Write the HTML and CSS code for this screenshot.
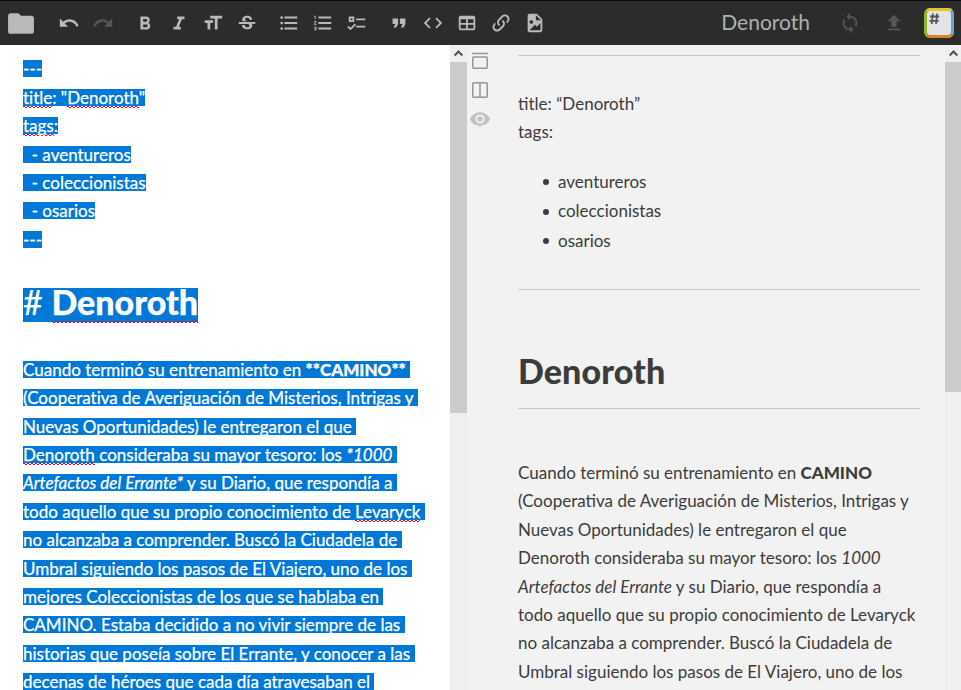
FILE: index.html
```
<!DOCTYPE html>
<html lang="es">
<head>
<meta charset="utf-8">
<title>Denoroth</title>
<link rel="stylesheet" href="styles.css">
</head>
<body>
<header class="navbar">
  <svg class="folder" viewBox="0 0 24 24"><path d="M10,4H4C2.89,4 2,4.89 2,6V18A2,2 0 0,0 4,20H20A2,2 0 0,0 22,18V8C22,6.89 21.1,6 20,6H12L10,4Z"/></svg>
  <div class="tools">
    <svg viewBox="0 0 24 24"><path d="M12.5,8C9.85,8 7.45,9 5.6,10.6L2,7V16H11L7.38,12.38C8.77,11.22 10.54,10.5 12.5,10.5C16.04,10.5 19.05,12.81 20.1,16L22.47,15.22C21.08,11.03 17.15,8 12.5,8Z"/></svg>
    <svg class="off" viewBox="0 0 24 24"><path d="M18.4,10.6C16.55,9 14.15,8 11.5,8C6.85,8 2.92,11.03 1.54,15.22L3.9,16C4.95,12.81 7.95,10.5 11.5,10.5C13.45,10.5 15.23,11.22 16.62,12.38L13,16H22V7L18.4,10.6Z"/></svg>
  </div>
  <div class="tools">
    <svg viewBox="0 0 24 24"><path d="M13.5,15.5H10V12.5H13.5A1.5,1.5 0 0,1 15,14A1.5,1.5 0 0,1 13.5,15.5M10,6.5H13A1.5,1.5 0 0,1 14.5,8A1.5,1.5 0 0,1 13,9.5H10M15.6,10.79C16.57,10.11 17.25,9 17.25,8C17.25,5.74 15.5,4 13.25,4H7V18H14.04C16.14,18 17.75,16.3 17.75,14.21C17.75,12.69 16.89,11.39 15.6,10.79Z" transform="translate(0 1)"/></svg>
    <svg viewBox="0 0 24 24"><path d="M10,4V7H12.21L8.79,15H6V18H14V15H11.79L15.21,7H18V4H10Z" transform="translate(0 1)"/></svg>
    <svg viewBox="0 0 24 24"><path d="M3,12H6V19H9V12H12V9H3M9,4V7H14V19H17V7H22V4H9Z"/></svg>
    <svg viewBox="0 0 24 24"><path d="M7.2,9.8C6,7.5 7.7,4.8 10.1,4.3C13.2,3.3 17.7,4.7 17.6,8.5H14.6C14.6,8.2 14.5,7.9 14.5,7.7C14.3,7.1 13.9,6.8 13.3,6.6C12.5,6.3 11.2,6.3 10.5,6.9C9,8.2 10.4,9.5 12,10H7.4C7.3,9.9 7.3,9.8 7.2,9.8M21,13V11H3V13H12.6C12.8,13.1 13,13.1 13.2,13.2C13.8,13.5 14.3,13.7 14.5,14.3C14.6,14.7 14.7,15.2 14.5,15.6C14.3,16.1 13.9,16.3 13.4,16.5C11.6,17 9.4,16.3 9.5,14.1H6.5C6.4,16.7 8.6,18.5 11,18.8C14.8,19.6 19.3,17.2 17.3,12.9L21,13Z"/></svg>
  </div>
  <div class="tools">
    <svg viewBox="0 0 24 24"><path d="M7,5H21V7H7V5M7,13V11H21V13H7M4,4.5A1.5,1.5 0 0,1 5.5,6A1.5,1.5 0 0,1 4,7.5A1.5,1.5 0 0,1 2.5,6A1.5,1.5 0 0,1 4,4.5M4,10.5A1.5,1.5 0 0,1 5.5,12A1.5,1.5 0 0,1 4,13.5A1.5,1.5 0 0,1 2.5,12A1.5,1.5 0 0,1 4,10.5M7,19V17H21V19H7M4,16.5A1.5,1.5 0 0,1 5.5,18A1.5,1.5 0 0,1 4,19.5A1.5,1.5 0 0,1 2.5,18A1.5,1.5 0 0,1 4,16.5Z"/></svg>
    <svg viewBox="0 0 24 24"><path d="M7,13H21V11H7M7,19H21V17H7M7,7H21V5H7M2,11H3.8L2,13.1V14H5V13H3.2L5,10.9V10H2M3,8H4V4H2V5H3M2,17H4V17.5H3V18.5H4V19H2V20H5V16H2V17Z"/></svg>
    <svg viewBox="0 0 24 24"><path d="M3,5H9V11H3V5M5,7V9H7V7H5M11,7H21V9H11V7M11,15H21V17H11V15M5,20L1.5,16.5L2.91,15.09L5,17.17L9.59,12.59L11,14L5,20Z"/></svg>
  </div>
  <div class="tools">
    <svg viewBox="0 0 24 24"><path d="M14,17H17L19,13V7H13V13H16M6,17H9L11,13V7H5V13H8L6,17Z"/></svg>
    <svg viewBox="0 0 24 24"><path d="M14.6,16.6L19.2,12L14.6,7.4L16,6L22,12L16,18L14.6,16.6M9.4,16.6L4.8,12L9.4,7.4L8,6L2,12L8,18L9.4,16.6Z"/></svg>
    <svg viewBox="0 0 24 24"><path d="M5,4H19A2,2 0 0,1 21,6V18A2,2 0 0,1 19,20H5A2,2 0 0,1 3,18V6A2,2 0 0,1 5,4M5,8V12H11V8H5M13,8V12H19V8H13M5,14V18H11V14H5M13,14V18H19V14H13Z"/></svg>
    <svg viewBox="0 0 24 24"><path d="M10.59,13.41C11,13.8 11,14.44 10.59,14.83C10.2,15.22 9.56,15.22 9.17,14.83C7.22,12.88 7.22,9.71 9.17,7.76L12.71,4.22C14.66,2.27 17.83,2.27 19.78,4.22C21.73,6.17 21.73,9.34 19.78,11.29L18.29,12.78C18.3,11.96 18.17,11.14 17.89,10.36L18.36,9.88C19.54,8.71 19.54,6.81 18.36,5.64C17.19,4.46 15.29,4.46 14.12,5.64L10.59,9.17C9.41,10.34 9.41,12.24 10.59,13.41M13.41,9.17C13.8,8.78 14.44,8.78 14.83,9.17C16.78,11.12 16.78,14.29 14.83,16.24L11.29,19.78C9.34,21.73 6.17,21.73 4.22,19.78C2.27,17.83 2.27,14.66 4.22,12.71L5.71,11.22C5.7,12.04 5.83,12.86 6.11,13.65L5.64,14.12C4.46,15.29 4.46,17.19 5.64,18.36C6.81,19.54 8.71,19.54 9.88,18.36L13.41,14.83C14.59,13.66 14.59,11.76 13.41,10.59C13,10.2 13,9.56 13.41,9.17Z"/></svg>
    <svg viewBox="0 0 24 24"><path d="M13,9H18.5L13,3.5V9M6,2H14L20,8V20A2,2 0 0,1 18,22H6C4.89,22 4,21.1 4,20V4C4,2.89 4.89,2 6,2M6,20H18V12L14,16L12,14L6,20M8,9A2,2 0 0,0 6,11A2,2 0 0,0 8,13A2,2 0 0,0 10,11A2,2 0 0,0 8,9Z"/></svg>
  </div>
  <div class="status">
    <span class="doc-name">Denoroth</span>
    <svg viewBox="0 0 24 24"><path d="M12,18A6,6 0 0,1 6,12C6,11 6.25,10.03 6.7,9.2L5.24,7.74C4.46,8.97 4,10.43 4,12A8,8 0 0,0 12,20V23L16,19L12,15M12,4V1L8,5L12,9V6A6,6 0 0,1 18,12C18,13 17.75,13.97 17.3,14.8L18.76,16.26C19.54,15.03 20,13.57 20,12A8,8 0 0,0 12,4Z"/></svg>
    <svg viewBox="0 0 24 24"><path d="M9,16V10H5L12,3L19,10H15V16H9M5,20V18H19V20H5Z"/></svg>
    <svg class="logo" viewBox="0 0 30 30">
      <rect width="30" height="30" rx="6" fill="#93b52f"/>
      <path d="M2 2Q4 0 6 0H24Q28 0 28.500 2L24 6H6Z" fill="#e3c52c"/>
      <path d="M28 2Q30 4 30 6V24Q30 27 28 28L24 24V6Z" fill="#6ba0de"/>
      <path d="M2 28Q4 30 6 30H24Q27 30 28 28L24 23H6Z" fill="#d98125"/>
      <rect x="3" y="3" width="24" height="24" rx="3.500" fill="#e4e4e4"/>
      <path d="M8.900 5.500L7.700 16M13.200 5.500L12 16M6 8.500H15.200M5.500 12.800H14.700" stroke="#555" stroke-width="1.800" fill="none"/>
    </svg>
  </div>
</header>
<main class="workspace">
  <section class="editor">
    <div class="source">
      <p><span class="sel">---</span></p>
      <p><span class="sel"><u>title</u>: "<u>Denoroth</u>"</span></p>
      <p><span class="sel"><u>tags</u>:</span></p>
      <p><span class="sel">  - aventureros</span></p>
      <p><span class="sel">  - coleccionistas</span></p>
      <p><span class="sel">  - osarios</span></p>
      <p><span class="sel">---</span></p>
      <h1><span class="sel"><i># </i><u>Denoroth</u></span></h1>
      <p><span class="sel">Cuando terminó su entrenamiento en <b>**CAMINO**</b> </span></p>
      <p><span class="sel">(Cooperativa de Averiguación de Misterios, Intrigas y </span></p>
      <p><span class="sel">Nuevas Oportunidades) le entregaron el que </span></p>
      <p><span class="sel"><u>Denoroth</u> consideraba su mayor tesoro: los <em>*1000</em> </span></p>
      <p><span class="sel"><em>Artefactos del Errante*</em> y su Diario, que respondía a </span></p>
      <p><span class="sel">todo aquello que su propio conocimiento de <u>Levaryck</u> </span></p>
      <p><span class="sel">no alcanzaba a comprender. Buscó la Ciudadela de </span></p>
      <p><span class="sel">Umbral siguiendo los pasos de El Viajero, uno de los </span></p>
      <p><span class="sel">mejores Coleccionistas de los que se hablaba en </span></p>
      <p><span class="sel">CAMINO. Estaba decidido a no vivir siempre de las </span></p>
      <p><span class="sel">historias que poseía sobre El Errante, y conocer a las </span></p>
      <p><span class="sel">decenas de héroes que cada día atravesaban el </span></p>
    </div>
    <div class="scrollbar">
      <svg viewBox="0 0 17 17"><path d="M4.700 10.500L8.500 6.500L12.300 10.500"/></svg>
      <div class="thumb"></div>
    </div>
  </section>
  <nav class="side">
    <svg viewBox="0 0 18 18"><path d="M1 1.500H17"/><rect x="1.750" y="5" width="14.500" height="11.250" rx="1"/></svg>
    <svg viewBox="0 0 18 18"><rect x="1.750" y="1.750" width="14.500" height="14.500" rx="1"/><path d="M9 2V16"/></svg>
    <svg class="eye" viewBox="0 0 24 24"><path d="M12,9A3,3 0 0,0 9,12A3,3 0 0,0 12,15A3,3 0 0,0 15,12A3,3 0 0,0 12,9M12,17A5,5 0 0,1 7,12A5,5 0 0,1 12,7A5,5 0 0,1 17,12A5,5 0 0,1 12,17M12,4.500C7,4.500 2.730,7.610 1,12C2.730,16.390 7,19.500 12,19.500C17,19.500 21.270,16.390 23,12C21.270,7.610 17,4.500 12,4.500Z"/></svg>
  </nav>
  <section class="preview">
    <article>
      <hr>
      <p class="meta">title: “Denoroth”<br>tags:</p>
      <ul>
        <li>aventureros</li>
        <li>coleccionistas</li>
        <li>osarios</li>
      </ul>
      <hr>
      <h1>Denoroth</h1>
      <p>Cuando terminó su entrenamiento en <b>CAMINO</b><br>(Cooperativa de Averiguación de Misterios, Intrigas y<br>Nuevas Oportunidades) le entregaron el que<br>Denoroth consideraba su mayor tesoro: los <em>1000<br>Artefactos del Errante</em> y su Diario, que respondía a<br>todo aquello que su propio conocimiento de Levaryck<br>no alcanzaba a comprender. Buscó la Ciudadela de<br>Umbral siguiendo los pasos de El Viajero, uno de los</p>
    </article>
    <div class="scrollbar right">
      <svg viewBox="0 0 17 17"><path d="M4.700 10.500L8.500 6.500L12.300 10.500"/></svg>
      <div class="thumb"></div>
    </div>
  </section>
</main>
</body>
</html>
```
FILE: styles.css
```
* {
  box-sizing: border-box;
}

body {
  margin: 0;
  height: 690px;
  display: flex;
  flex-direction: column;
  overflow: hidden;
  background: #f2f2f2;
  color: #3c3c3c;
  font: 17px/28.39px Lato, sans-serif;
}

p, h1, ul, hr {
  margin: 0;
}

h1, b {
  font-weight: 900;
}

.navbar {
  flex: none;
  height: 45px;
  display: flex;
  align-items: center;
  padding: 0 7px 0 5px;
  border-top: 1px solid #0c0c0c;
  background: #2c2c2c;
}

.navbar svg {
  flex: none;
  width: 22px;
  height: 22px;
  fill: #b9b9b9;
}

.navbar .folder {
  width: 32px;
  height: 31px;
  margin-right: 21px;
}

.tools {
  display: flex;
  gap: 12px;
  margin-right: 20px;
}

.navbar .off {
  fill: #565656;
}

.status {
  display: flex;
  align-items: center;
  margin-left: auto;
}

.navbar .status svg {
  fill: #565656;
  margin-right: 22px;
}

.navbar .status .logo {
  width: 30px;
  height: 30px;
  margin: 0 0 0 -3px;
}

.doc-name {
  margin: -2px 29px 0 0;
  font-size: 21px;
  color: #b0b0b0;
}

.workspace {
  flex: 1;
  min-height: 0;
  display: flex;
}

.editor {
  width: 467px;
  display: flex;
  background: #fff;
}

.source {
  flex: 1;
  padding: 10.4px 0 0 23px;
  overflow: hidden;
  color: #fff;
  font-variant-ligatures: none;
  -webkit-text-stroke: 0.25px #fff;
}

.source p,
.source h1 {
  white-space: pre;
}

.sel {
  background: linear-gradient(#0078d7, #0078d7) 0 2px / 100% 17px no-repeat;
}

.source h1 {
  margin: 24px 0 29.7px;
  font-size: 34px;
  line-height: 48px;
}

.source h1 .sel {
  background-position: 0 7px;
  background-size: 100% 34px;
}

.source h1 i {
  font-style: normal;
  font-weight: 400;
}

/* spell-check squiggle: two staggered rows of dashes */
.source u {
  --y: 19px;
  padding-bottom: 4px;
  text-decoration: none;
  background-image:
    repeating-linear-gradient(90deg, #c8102e 0 2px, transparent 2px 4px),
    repeating-linear-gradient(90deg, transparent 0 2px, #c8102e 2px 4px);
  background-position: 0 var(--y), 0 calc(var(--y) + 1px);
  background-size: 100% 1px;
  background-repeat: no-repeat;
}

.source h1 u {
  --y: 40px;
}

.scrollbar {
  flex: none;
  width: 17px;
  background: #efefef;
}

.scrollbar svg {
  display: block;
  width: 17px;
  height: 17px;
  fill: none;
  stroke: #505050;
  stroke-width: 2;
}

.thumb {
  height: 351px;
  background: #cbcbcb;
}

.right {
  width: 16px;
}

.right .thumb {
  height: 330px;
}

.side {
  width: 26px;
  display: flex;
  flex-direction: column;
  align-items: center;
  padding-top: 7px;
  gap: 11px;
}

.side svg {
  width: 18px;
  height: 18px;
  fill: none;
  stroke: #969696;
  stroke-width: 1.5;
}

.side .eye {
  width: 22px;
  height: 22px;
  margin-top: -2px;
  fill: #c2c2c2;
  stroke: none;
}

.preview {
  flex: 1;
  display: flex;
}

article {
  flex: 1;
  padding: 10px 25px 0;
  overflow: hidden;
  white-space: nowrap;
}

hr {
  border: 0;
  border-top: 1px solid #c8c8c8;
}

.meta {
  margin-top: 34px;
}

ul {
  margin: 20px 0 34px;
  padding-left: 40px;
  list-style: none;
}

li {
  display: flex;
  align-items: center;
  line-height: 29.4px;
}

li::before {
  content: "";
  width: 6px;
  height: 6px;
  margin: 2px 9px 0 -15px;
  border-radius: 50%;
  background: #3c3c3c;
}

article h1 {
  height: 119px;
  margin-bottom: 50px;
  padding-top: 57px;
  border-bottom: 1px solid #c8c8c8;
  font-size: 34px;
  line-height: 48px;
  letter-spacing: 0.1px;
}
```
